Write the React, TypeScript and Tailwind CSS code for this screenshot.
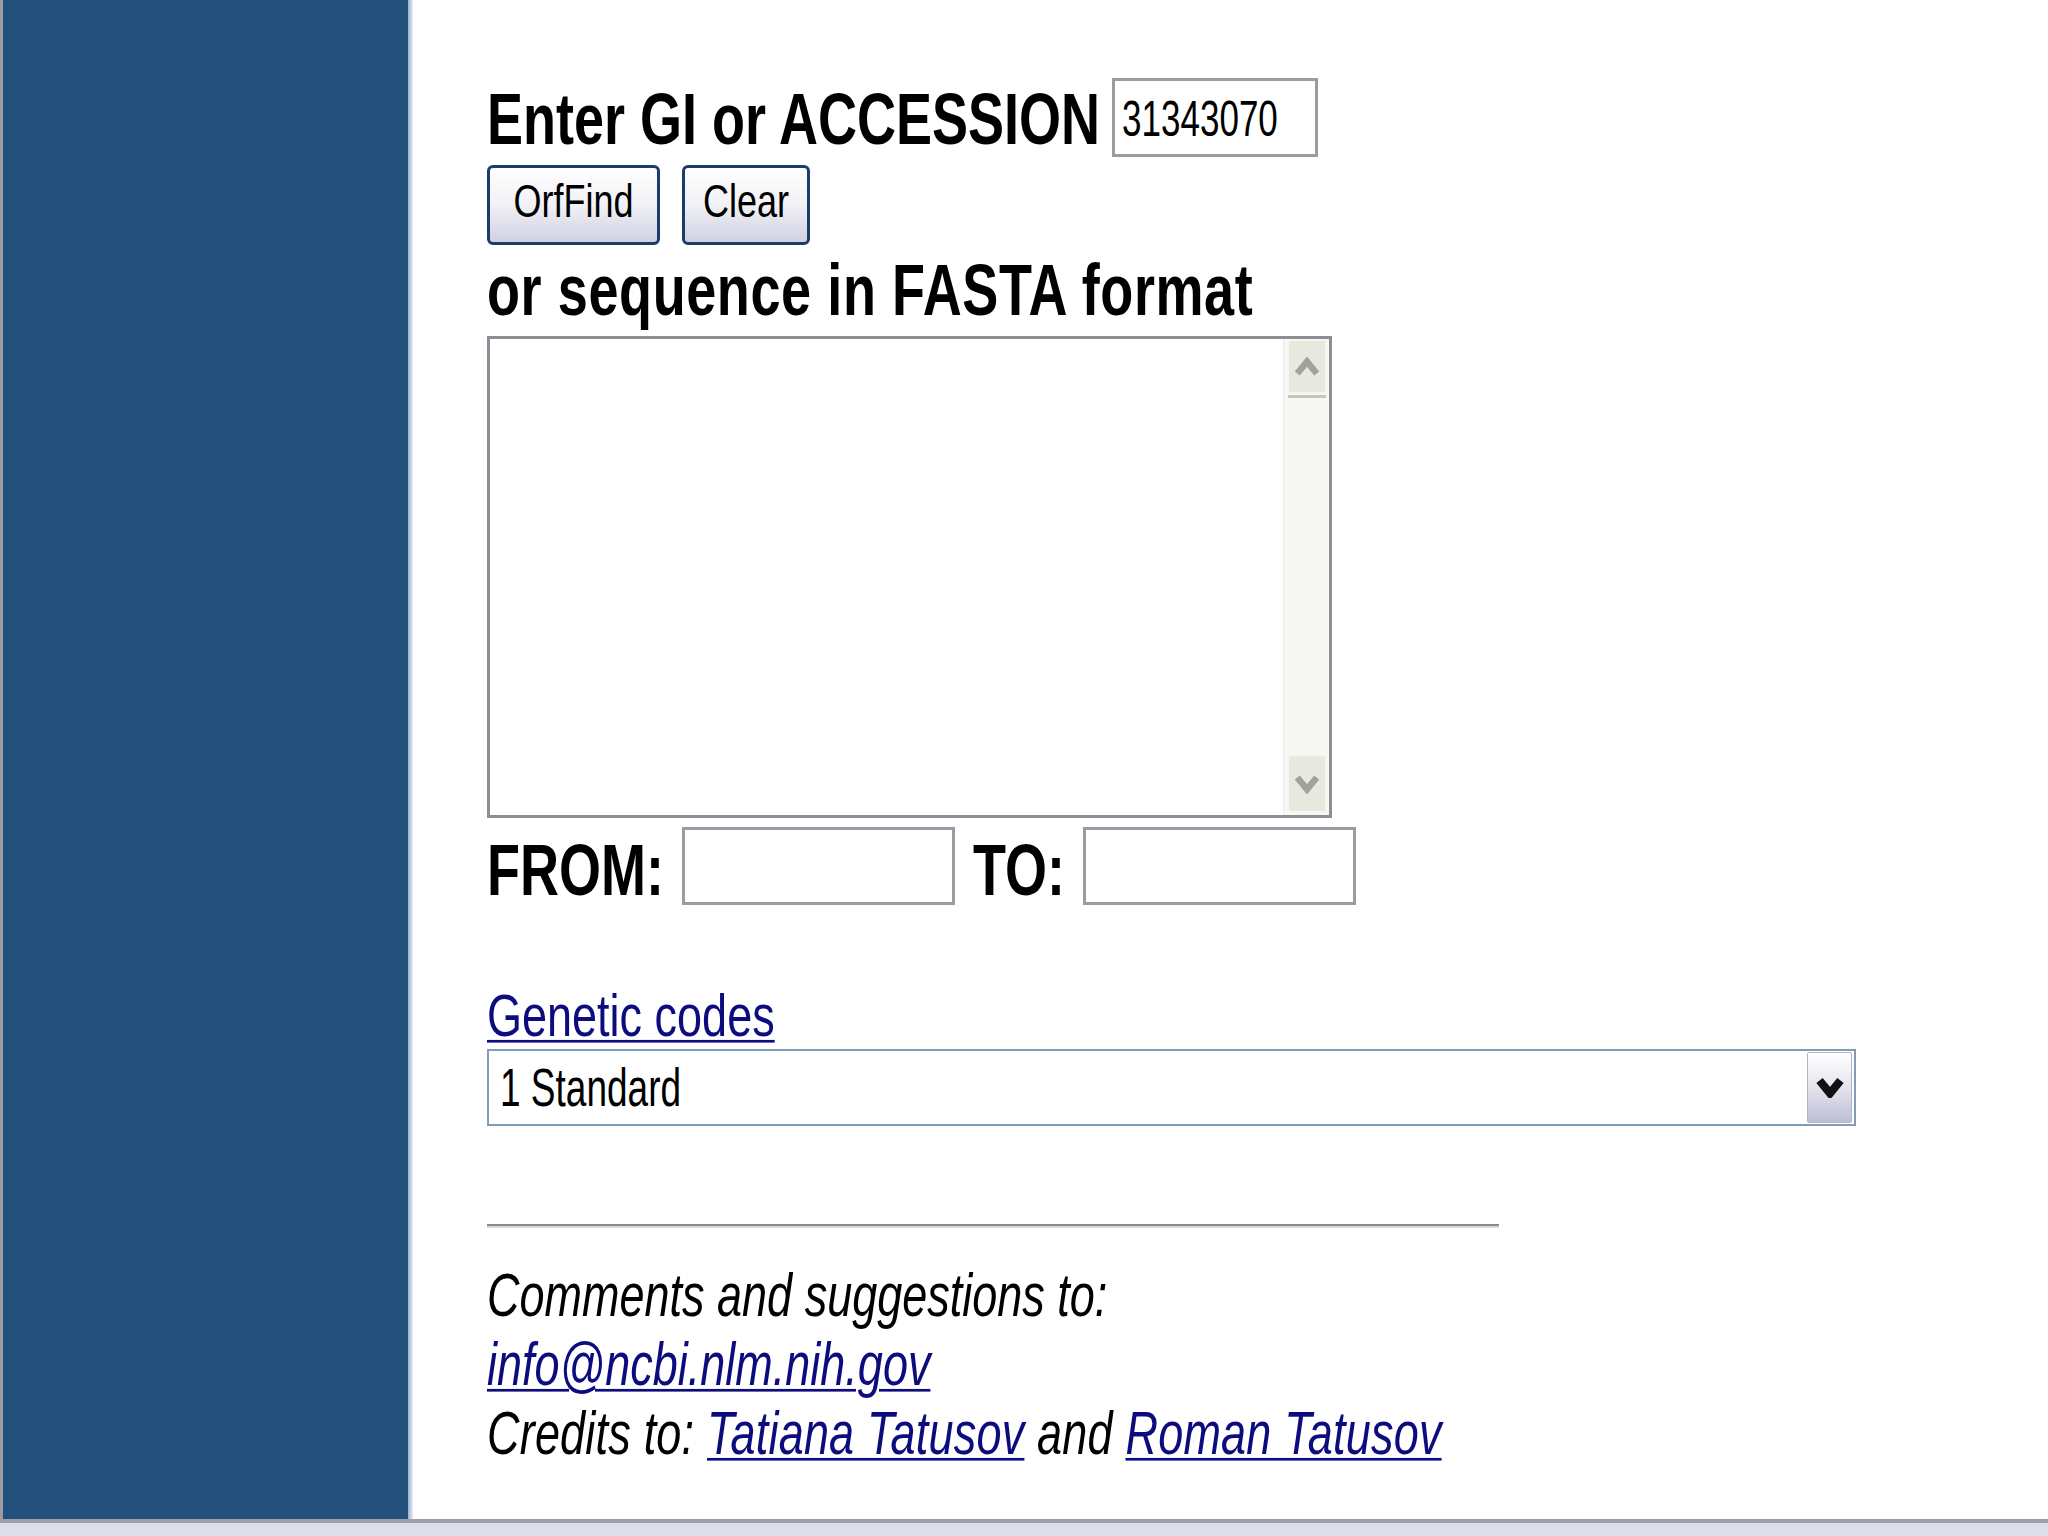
import React from 'react';

// Old NCBI ORF Finder form. The original screenshot is stretched vertically,
// so every text run is drawn at its real width and scaled on the y axis
// around its baseline.

const font = "font-['Liberation_Sans',Arial,sans-serif]";

function Chevron({ up, color, width, size }: { up?: boolean; color: string; width: number; size: number }) {
  return (
    <svg width={size} height={Math.round(size * 0.75)} viewBox="0 0 24 18" fill="none">
      <polyline
        points={up ? '3,15 12,4 21,15' : '3,3 12,14 21,3'}
        stroke={color}
        strokeWidth={width}
        strokeLinejoin="miter"
        strokeLinecap="butt"
      />
    </svg>
  );
}

function Field({ width, children }: { width: string; children?: React.ReactNode }) {
  return (
    <div className={`${width} h-[78px] shrink-0 border-[3px] border-[#9a9ca3] bg-white`}>{children}</div>
  );
}

function FormButton({ label, width }: { label: string; width: string }) {
  return (
    <button
      type="button"
      className={`${width} h-[80px] shrink-0 rounded-[6px] border-[3px] border-[#1d3b6c] bg-linear-to-b from-white via-[#f1f1f6] to-[#d0d0e2] flex items-center justify-center`}
    >
      <span className="inline-block leading-none text-[36px] text-black origin-[50%_85%] scale-y-[1.3]">
        {label}
      </span>
    </button>
  );
}

export default function App() {
  return (
    <div className={`${font} h-[1536px] w-full flex flex-col bg-white text-black`}>
      <div className="flex flex-1 min-h-0">
        <aside className="w-[413px] shrink-0 flex">
          <div className="w-[3px] bg-[#9c9c9c]" />
          <div className="flex-1 bg-[#234f7c]" />
          <div className="w-[5px] bg-linear-to-r from-[#9db1d1] to-[#e8eef7]" />
        </aside>

        <main className="flex-1 pl-[74px] pt-[78px] flex flex-col items-start">
          {/* GI / accession */}
          <div className="flex items-start h-[79px]">
            <span className="mt-[20px] inline-block leading-none text-[54px] font-bold origin-[50%_85%] scale-y-[1.345]">
              Enter GI or ACCESSION
            </span>
            <div className="ml-[12px] w-[206px] h-[79px] border-[3px] border-[#9a9ca3] flex items-start pl-[7px]">
              <span className="mt-[25px] inline-block leading-none text-[35px] origin-[50%_85%] scale-y-[1.45]">
                31343070
              </span>
            </div>
          </div>

          <div className="mt-[8px] flex gap-[22px]">
            <FormButton label="OrfFind" width="w-[173px]" />
            <FormButton label="Clear" width="w-[128px]" />
          </div>

          <span className="mt-[24px] inline-block leading-none text-[54px] font-bold tracking-[0.6px] origin-[50%_85%] scale-y-[1.345]">
            or sequence in FASTA format
          </span>

          {/* sequence box */}
          <div className="mt-[13px] w-[845px] h-[482px] border-[3px] border-[#8b8e95] bg-white flex justify-end">
            <div className="w-[46px] h-full bg-[#f7f7f3] border-l border-[#ececea] flex flex-col justify-between pl-[4px] pr-[3px] pt-[1px] pb-[3px]">
              <div className="h-[58px] flex flex-col">
                <div className="h-[53px] bg-[#e8eadf] border border-[#f4f5ee] flex items-center justify-center">
                  <Chevron up color="#a0a399" width={6} size={26} />
                </div>
                <div className="mt-[2px] h-[3px] bg-[#c4c7b9]" />
              </div>
              <div className="h-[57px] bg-[#e8eadf] border border-[#f4f5ee] flex items-center justify-center">
                <Chevron color="#a0a399" width={6} size={26} />
              </div>
            </div>
          </div>

          {/* range */}
          <div className="mt-[9px] flex items-start h-[78px]">
            <span className="mt-[22px] inline-block leading-none text-[54px] font-bold origin-[50%_85%] scale-y-[1.345]">
              FROM:
            </span>
            <div className="ml-[18px]">
              <Field width="w-[273px]" />
            </div>
            <span className="ml-[18px] mt-[22px] inline-block leading-none text-[54px] font-bold origin-[50%_85%] scale-y-[1.345]">
              TO:
            </span>
            <div className="ml-[18px]">
              <Field width="w-[273px]" />
            </div>
          </div>

          {/* genetic code */}
          <span className="mt-[93px] inline-block leading-none text-[45px] origin-[50%_85%] scale-y-[1.335]">
            <a href="#" className="text-[#0c0c7e] underline decoration-2 underline-offset-[3px]">
              Genetic codes
            </a>
          </span>

          <div className="mt-[6px] w-[1369px] h-[77px] border-2 border-[#7f9db9] bg-white flex items-stretch py-[1px] pr-[2px]">
            <div className="flex-1 flex items-center pl-[11px]">
              <span className="mt-[12px] inline-block leading-none text-[37px] origin-[50%_85%] scale-y-[1.45]">
                1 Standard
              </span>
            </div>
            <div className="w-[45px] border border-[#b3b3c6] rounded-[2px] bg-linear-to-b from-white via-[#e4e4ee] to-[#bdbdd6] flex items-center justify-center">
              <Chevron color="#111111" width={7} size={28} />
            </div>
          </div>

          <div className="mt-[98px] w-[1012px] h-[4px] border-t-2 border-b-2 border-t-[#8a8a8a] border-b-[#d9d9d9]" />

          {/* footer */}
          <div className="mt-[50px] flex flex-col italic">
            <div className="h-[69px]">
              <span className="inline-block leading-none text-[45px] origin-[50%_85%] scale-y-[1.34]">
                Comments and suggestions to:
              </span>
            </div>
            <div className="h-[69px]">
              <span className="inline-block leading-none text-[45px] origin-[50%_85%] scale-y-[1.34]">
                <a href="#" className="text-[#0c0c7e] underline decoration-2 underline-offset-[3px]">
                  info@ncbi.nlm.nih.gov
                </a>
              </span>
            </div>
            <div className="h-[69px]">
              <span className="inline-block leading-none text-[45px] tracking-[0.2px] origin-[50%_85%] scale-y-[1.34] whitespace-pre">
                Credits to:{' '}
                <a href="#" className="text-[#0c0c7e] underline decoration-2 underline-offset-[3px]">
                  Tatiana Tatusov
                </a>{' '}
                and{' '}
                <a href="#" className="text-[#0c0c7e] underline decoration-2 underline-offset-[3px]">
                  Roman Tatusov
                </a>
              </span>
            </div>
          </div>
        </main>
      </div>
      <div className="h-[17px] shrink-0 border-t-[4px] border-[#9ca0aa] bg-[#dfdfeb]" />
    </div>
  );
}
